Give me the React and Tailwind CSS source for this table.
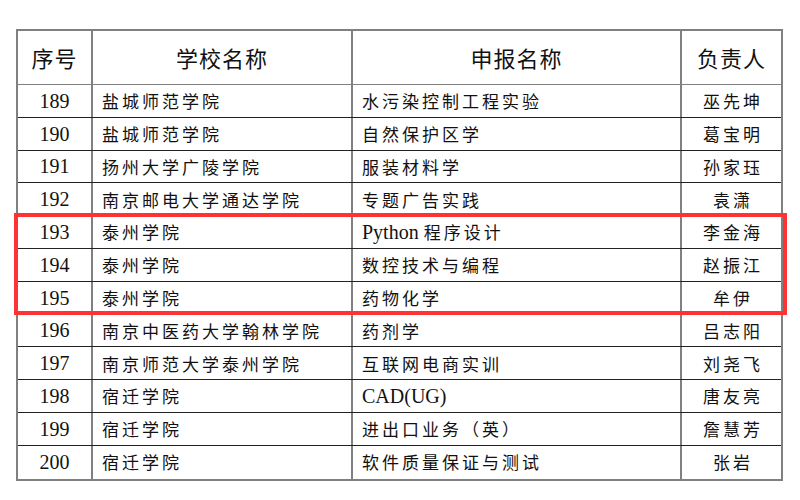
const rows = [
  ["189", "盐城师范学院", "水污染控制工程实验", "巫先坤"],
  ["190", "盐城师范学院", "自然保护区学", "葛宝明"],
  ["191", "扬州大学广陵学院", "服装材料学", "孙家珏"],
  ["192", "南京邮电大学通达学院", "专题广告实践", "袁潇"],
  ["193", "泰州学院", "Python 程序设计", "李金海"],
  ["194", "泰州学院", "数控技术与编程", "赵振江"],
  ["195", "泰州学院", "药物化学", "牟伊"],
  ["196", "南京中医药大学翰林学院", "药剂学", "吕志阳"],
  ["197", "南京师范大学泰州学院", "互联网电商实训", "刘尧飞"],
  ["198", "宿迁学院", "CAD(UG)", "唐友亮"],
  ["199", "宿迁学院", "进出口业务（英）", "詹慧芳"],
  ["200", "宿迁学院", "软件质量保证与测试", "张岩"],
];

const serif = "font-['Liberation_Serif','Noto_Sans_CJK_SC',serif]";
const cjk = "font-['Noto_Sans_CJK_SC',sans-serif]";

function Project({ text }) {
  if (text.startsWith("Python")) {
    return (
      <span className={serif}>
        <span className="tracking-normal text-[20px]">Python </span>
        <span className={`${cjk} tracking-[3px]`}>程序设计</span>
      </span>
    );
  }
  if (text === "CAD(UG)") {
    return <span className={`${serif} text-[20px] tracking-normal`}>CAD(UG)</span>;
  }
  return <span className={`${cjk} tracking-[3px]`}>{text}</span>;
}

export default function App() {
  return (
    <div className="w-[800px] h-[500px] bg-white text-[#111] overflow-hidden pt-[29px] pl-[16px]">
      <div className="relative w-[767px] border-2 border-[#808080]">
        <div className="grid grid-cols-[75px_260px_329px_99px] h-[54px] border-b border-[#808080]">
          {["序号", "学校名称", "申报名称", "负责人"].map((h, i) => (
            <div
              key={h}
              className={`flex items-center justify-center text-[22px] ${cjk} tracking-[1px] ${
                i < 3 ? "border-r-2 border-[#808080]" : ""
              }`}
            >
              {h}
            </div>
          ))}
        </div>
        {rows.map((r, idx) => (
          <div
            key={r[0]}
            className={`grid grid-cols-[75px_260px_329px_99px] h-[32.8px] ${
              idx < rows.length - 1 ? "border-b border-[#222]" : ""
            }`}
          >
            <div className={`flex items-center justify-center border-r-2 border-[#808080] text-[20px] ${serif}`}>
              {r[0]}
            </div>
            <div className={`flex items-center pl-[9px] border-r-2 border-[#808080] text-[17px] ${cjk} tracking-[3px]`}>
              {r[1]}
            </div>
            <div className="flex items-center pl-[9px] border-r-2 border-[#808080] text-[17px]">
              <Project text={r[2]} />
            </div>
            <div className={`flex items-center justify-center text-[17px] ${cjk} tracking-[3px] pl-[3px]`}>
              {r[3]}
            </div>
          </div>
        ))}
        <div className="absolute left-[-4px] top-[182px] w-[773px] h-[102px] border-4 border-[#ff3333]" />
      </div>
    </div>
  );
}
